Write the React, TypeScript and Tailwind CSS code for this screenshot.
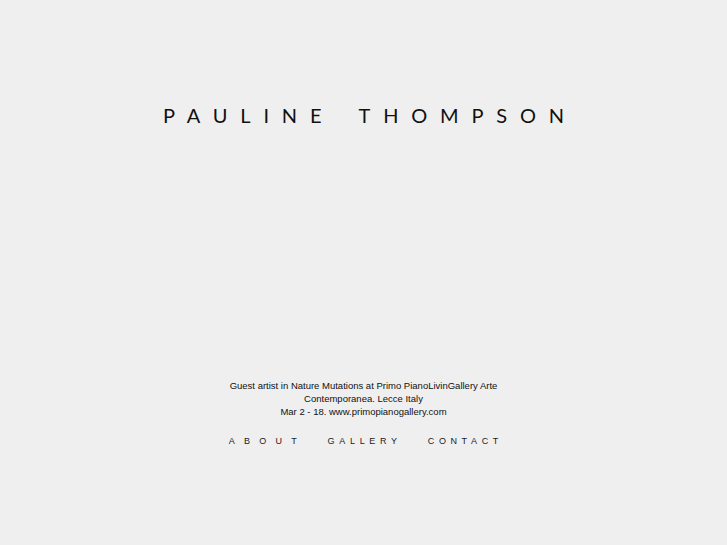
import React from 'react';

const NAV = [
  { label: 'ABOUT', cls: 'tracking-[9.25px] mr-[21.5px]' },
  { label: 'GALLERY', cls: 'tracking-[4.7px] mr-[26px]' },
  { label: 'CONTACT', cls: 'tracking-[4.6px] -mr-[4.6px]' },
];

const App: React.FC = () => {
  return (
    <div className="w-full h-[545px] bg-[#efefef] flex flex-col items-center overflow-hidden">
      {/* Title */}
      <h1 className="mt-[104px] pl-[12.8px] font-['Lato',sans-serif] text-[20px] leading-[22px] tracking-[12.8px] [word-spacing:7px] text-[#111]">
        PAULINE THOMPSON
      </h1>

      {/* Exhibition note */}
      <p className="mt-[253px] text-center font-['Liberation_Sans',Arial,sans-serif] text-[9.5px] leading-[13px] text-[#111]">
        Guest artist in Nature Mutations at Primo PianoLivinGallery Arte
        <br />
        Contemporanea. Lecce Italy
        <br />
        Mar 2 - 18. www.primopianogallery.com
      </p>

      {/* Navigation */}
      <nav className="mt-[18px] flex font-['Liberation_Sans',Arial,sans-serif] text-[9px] leading-[11px] text-[#222]">
        {NAV.map((item) => (
          <a key={item.label} href="#" className={`block text-[#222] ${item.cls}`}>
            {item.label}
          </a>
        ))}
      </nav>
    </div>
  );
};

export default App;
